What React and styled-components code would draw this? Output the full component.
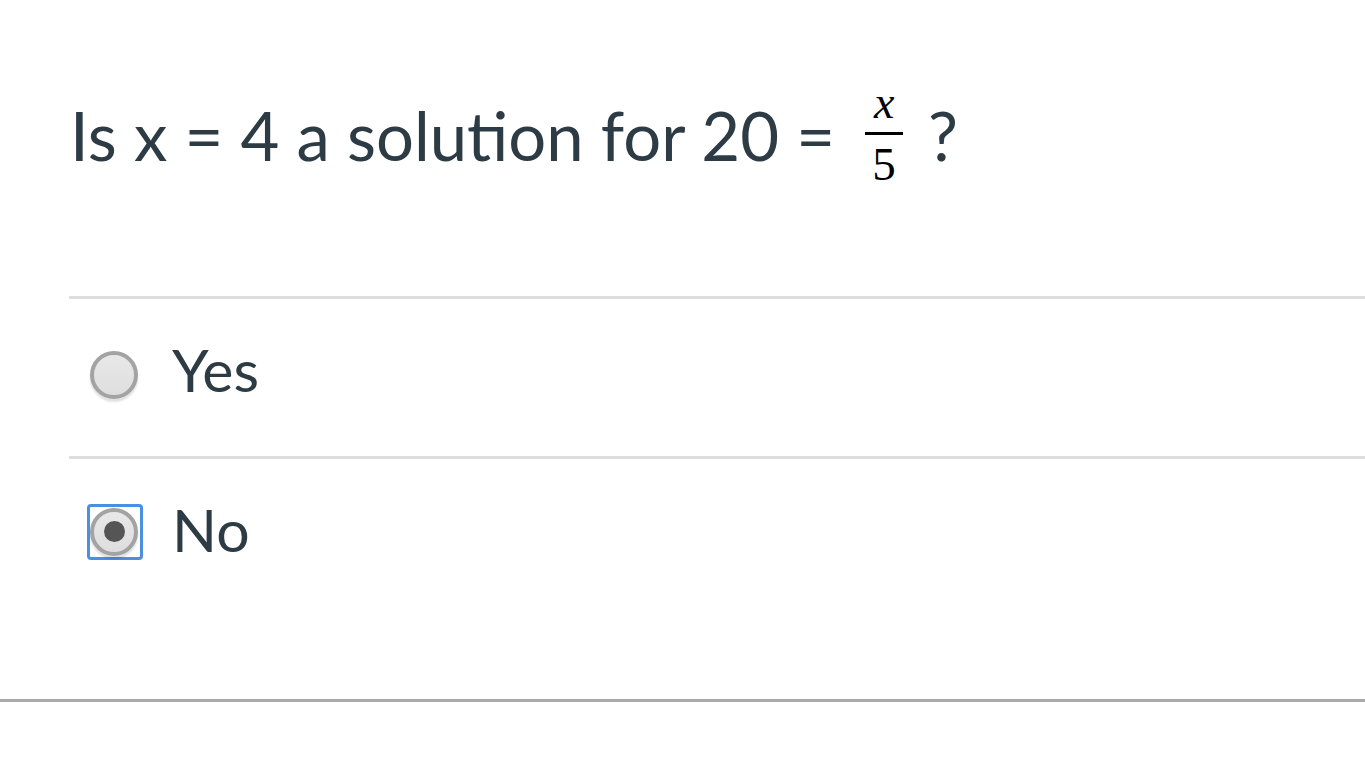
import React from "react";
import styled, { createGlobalStyle } from "styled-components";

const Global = createGlobalStyle`
  html, body { margin: 0; padding: 0; background: #fff; }
  body { font-family: Lato, "Open Sans", sans-serif; color: #2d3b45; }
`;

const Page = styled.div`
  height: 702px;
  border-bottom: 3px solid #aaaaaa;
  box-sizing: border-box;
`;

const Question = styled.div`
  display: flex;
  align-items: center;
  padding: 79px 0 0 70px;
  height: 113px;
  font-size: 67px;
  line-height: 1;
  white-space: pre;
`;

const Frac = styled.span`
  display: inline-flex;
  flex-direction: column;
  align-items: center;
  margin: 0 25px 0 30px;
  font-family: "Liberation Serif", "DejaVu Serif", serif;
  color: #000;
`;

const Num = styled.span`
  font-style: italic;
  font-size: 46px;
  line-height: 30px;
  padding-bottom: 14px;
`;

const Bar = styled.span`
  width: 38px;
  height: 3px;
  background: #000;
`;

const Den = styled.span`
  font-size: 47px;
  line-height: 40px;
  padding-top: 9px;
`;

const Answers = styled.div`
  margin: 104px 0 0 69px;
`;

const Row = styled.label`
  display: flex;
  align-items: center;
  height: 157px;
  border-top: 3px solid #dddddd;
  padding-left: 18px;
  font-size: 59px;
  cursor: pointer;
`;

const Focus = styled.span`
  display: flex;
  align-items: center;
  justify-content: flex-start;
  width: 50px;
  height: 50px;
  border: 3px solid ${p => (p.$focused ? "#4a90e2" : "transparent")};
  border-radius: 4px;
  margin-right: 29px;
  margin-top: ${p => p.$offset}px;
`;

const Radio = styled.span`
  width: 48px;
  height: 48px;
  border-radius: 50%;
  border: 4px solid #a3a3a3;
  background: linear-gradient(#e8e8e8, #dedede);
  box-shadow: 0 3px 2px rgba(0, 0, 0, 0.12);
  box-sizing: border-box;
  display: flex;
  align-items: center;
  justify-content: center;
`;

const Dot = styled.span`
  width: 21px;
  height: 21px;
  border-radius: 50%;
  background: #555;
`;

const Label = styled.span`
  line-height: 1;
  margin-top: ${p => p.$offset}px;
`;

export default function App() {
  return (
    <Page>
      <Global />
      <Question>
        Is x = 4 a solution for 20 =
        <Frac>
          <Num>x</Num>
          <Bar />
          <Den>5</Den>
        </Frac>
        ?
      </Question>
      <Answers>
        <Row>
          <Focus $offset={-6}>
            <Radio />
          </Focus>
          <Label $offset={-16}>Yes</Label>
        </Row>
        <Row>
          <Focus $focused $offset={-12}>
            <Radio>
              <Dot />
            </Radio>
          </Focus>
          <Label $offset={-16}>No</Label>
        </Row>
      </Answers>
    </Page>
  );
}
